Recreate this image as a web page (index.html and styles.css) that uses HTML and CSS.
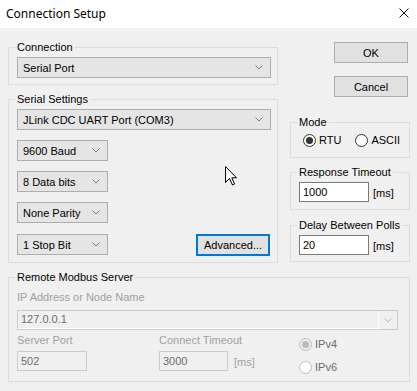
FILE: index.html
```html
<!DOCTYPE html>
<html lang="en">
<head>
    <meta charset="UTF-8">
    <title>Connection Setup</title>
    <link rel="stylesheet" href="styles.css">
</head>
<body>
    <div class="window">
        <div class="titlebar">
            <span class="title">Connection Setup</span>
            <svg class="close" width="10" height="10" viewBox="0 0 10 10">
                <path d="M0.5 0.5 L9.5 9.5 M9.5 0.5 L0.5 9.5" stroke="#111" stroke-width="1" fill="none"/>
            </svg>
        </div>

        <div class="dialog">
            <div class="top">
                <!-- Left column -->
                <div class="left">
                    <fieldset class="group conn">
                        <legend>Connection</legend>
                        <div class="combo wide"><span>Serial Port</span><svg class="chev" width="8" height="5" viewBox="0 0 8 5"><path d="M0.5 0.5 L4 4 L7.5 0.5" stroke="#7a7a7a" fill="none"/></svg></div>
                    </fieldset>

                    <fieldset class="group serial">
                        <legend>Serial Settings</legend>
                        <div class="combo wide"><span>JLink CDC UART Port (COM3)</span><svg class="chev" width="8" height="5" viewBox="0 0 8 5"><path d="M0.5 0.5 L4 4 L7.5 0.5" stroke="#7a7a7a" fill="none"/></svg></div>
                        <div class="combo small"><span>9600 Baud</span><svg class="chev" width="8" height="5" viewBox="0 0 8 5"><path d="M0.5 0.5 L4 4 L7.5 0.5" stroke="#7a7a7a" fill="none"/></svg></div>
                        <div class="combo small"><span>8 Data bits</span><svg class="chev" width="8" height="5" viewBox="0 0 8 5"><path d="M0.5 0.5 L4 4 L7.5 0.5" stroke="#7a7a7a" fill="none"/></svg></div>
                        <div class="combo small"><span>None Parity</span><svg class="chev" width="8" height="5" viewBox="0 0 8 5"><path d="M0.5 0.5 L4 4 L7.5 0.5" stroke="#7a7a7a" fill="none"/></svg></div>
                        <div class="last-row">
                            <div class="combo small"><span>1 Stop Bit</span><svg class="chev" width="8" height="5" viewBox="0 0 8 5"><path d="M0.5 0.5 L4 4 L7.5 0.5" stroke="#7a7a7a" fill="none"/></svg></div>
                            <button class="btn default">Advanced...</button>
                        </div>
                    </fieldset>
                </div>

                <!-- Right column -->
                <div class="right">
                    <button class="btn ok">OK</button>
                    <button class="btn cancel">Cancel</button>

                    <fieldset class="group mode">
                        <legend>Mode</legend>
                        <div class="radios">
                            <label class="radio-item"><span class="radio checked"></span>RTU</label>
                            <label class="radio-item second"><span class="radio"></span>ASCII</label>
                        </div>
                    </fieldset>

                    <fieldset class="group timing">
                        <legend>Response Timeout</legend>
                        <div class="field-row">
                            <div class="input">1000</div>
                            <span class="unit">[ms]</span>
                        </div>
                    </fieldset>

                    <fieldset class="group timing delay">
                        <legend>Delay Between Polls</legend>
                        <div class="field-row">
                            <div class="input">20</div>
                            <span class="unit">[ms]</span>
                        </div>
                    </fieldset>
                </div>
            </div>

            <!-- Remote server (disabled) -->
            <fieldset class="group remote">
                <legend>Remote Modbus Server</legend>
                <div class="dim-label">IP Address or Node Name</div>
                <div class="combo disabled"><span class="edit">127.0.0.1</span><span class="drop"><svg class="chev" width="8" height="5" viewBox="0 0 8 5"><path d="M0.5 0.5 L4 4 L7.5 0.5" stroke="#b5b5b5" fill="none"/></svg></span></div>
                <div class="remote-row">
                    <div class="col port">
                        <div class="dim-label">Server Port</div>
                        <div class="input disabled">502</div>
                    </div>
                    <div class="col conn-timeout">
                        <div class="dim-label">Connect Timeout</div>
                        <div class="field-row">
                            <div class="input disabled">3000</div>
                            <span class="unit dim">[ms]</span>
                        </div>
                    </div>
                    <div class="col ip">
                        <label class="radio-item off"><span class="radio checked"></span>IPv4</label>
                        <label class="radio-item off v6"><span class="radio"></span>IPv6</label>
                    </div>
                </div>
            </fieldset>
        </div>

        <svg class="cursor" width="13" height="20" viewBox="0 0 13 20">
            <path d="M0.5 0.5 L0.5 16.5 L4.5 12.5 L7.5 19 L9.5 18 L6.8 11.8 L11.5 11.8 Z" fill="#fff" stroke="#000" stroke-width="1" stroke-linejoin="miter"/>
        </svg>
    </div>
</body>
</html>
```

FILE: styles.css
```css
/* General */
body {
    margin: 0;
    padding: 0;
    font-family: "Liberation Sans", Arial, sans-serif;
    font-size: 11px;
    color: #000;
    background-color: #f0f0f0;
}

.window {
    position: relative;
    width: 417px;
    height: 391px;
    background-color: #f0f0f0;
}

/* Title bar */
.titlebar {
    height: 28px;
    background-color: #fff;
    display: flex;
    align-items: center;
    justify-content: space-between;
    padding: 0 8px 0 6px;
}

.title {
    font-family: "Noto Sans", sans-serif;
    font-size: 12px;
    line-height: 28px;
    color: #000;
}

.close {
    display: block;
    margin-top: -2px;
}

/* Dialog body */
.dialog {
    padding: 13px 7px 0 8px;
}

.top {
    display: flex;
    gap: 12px;
}

.left {
    width: 270px;
}

.right {
    width: 120px;
    display: flex;
    flex-direction: column;
    align-items: stretch;
}

/* Group boxes */
.group {
    margin: 0;
    padding: 3px 6px 6px 8px;
    border: 1px solid #dcdcdc;
    min-width: 0;
}

.group legend {
    padding: 0 2px;
    margin-left: -2px;
    line-height: 13px;
    font-size: 11px;
}

.serial {
    margin-top: 8px;
}

/* Combo boxes */
.combo {
    height: 21px;
    box-sizing: border-box;
    border: 1px solid #adadad;
    background-color: #e5e5e5;
    display: flex;
    align-items: center;
    justify-content: space-between;
    padding: 0 7px 0 5px;
}

.combo .chev {
    display: block;
}

.serial .combo + .combo,
.serial .last-row {
    margin-top: 10px;
}

.combo.small {
    width: 91px;
}

.last-row {
    display: flex;
    justify-content: space-between;
    align-items: center;
}

/* Buttons */
.btn {
    font-family: "Liberation Sans", Arial, sans-serif;
    font-size: 11px;
    color: #000;
    background-color: #e1e1e1;
    border: 1px solid #adadad;
    height: 21px;
    padding: 0;
    box-sizing: border-box;
}

.btn.default {
    width: 74px;
    height: 22px;
    border: 2px solid #0078d7;
    margin-right: 1px;
    margin-top: 1px;
}

.btn.ok,
.btn.cancel {
    width: 74px;
    align-self: flex-end;
    margin-right: 2px;
}

.btn.ok {
    margin-top: 1px;
}

.btn.cancel {
    margin-top: 13px;
}

/* Mode */
.mode {
    margin-top: 19px;
    padding-top: 5px;
    padding-bottom: 10px;
}

.radios {
    display: flex;
    padding-left: 4px;
}

.radio-item {
    display: flex;
    align-items: center;
    height: 13px;
    line-height: 13px;
}

.radio-item.second {
    margin-left: 14px;
}

.radio {
    width: 13px;
    height: 13px;
    box-sizing: border-box;
    border: 1px solid #333;
    border-radius: 50%;
    background-color: #fff;
    margin-right: 3px;
    position: relative;
}

.radio.checked::after {
    content: "";
    position: absolute;
    left: 2px;
    top: 2px;
    width: 7px;
    height: 7px;
    border-radius: 50%;
    background-color: #333;
}

/* Timing inputs */
.timing {
    margin-top: 8px;
    padding-bottom: 7px;
}

.timing.delay {
    margin-top: 9px;
    padding-bottom: 6px;
}

.field-row {
    display: flex;
    align-items: center;
}

.input {
    width: 70px;
    height: 20px;
    box-sizing: border-box;
    border: 1px solid #7a7a7a;
    background-color: #fff;
    padding-left: 3px;
    line-height: 18px;
}

.unit {
    margin-left: 4px;
    padding-top: 2px;
}

/* Remote server, disabled */
.remote {
    margin-top: 8px;
    padding: 7px 11px 7px 8px;
}

.dim-label {
    color: #a0a0a0;
    line-height: 13px;
}

.combo.disabled {
    margin-top: 6px;
    height: 20px;
    padding: 0;
    border-color: #cccccc;
    background-color: #f0f0f0;
    color: #6d6d6d;
    align-items: stretch;
}

.combo.disabled .edit {
    flex: 1;
    padding-left: 3px;
    line-height: 17px;
    box-shadow: inset -1px -1px 0 #fff;
}

.combo.disabled .drop {
    width: 18px;
    display: flex;
    align-items: center;
    justify-content: center;
}

.remote-row {
    display: flex;
    margin-top: 4px;
}

.remote-row .col {
    flex-shrink: 0;
}

.col.port {
    width: 142px;
}

.col.conn-timeout {
    width: 140px;
}

.col.ip {
    flex: 1;
    padding-top: 4px;
}

.remote-row .dim-label {
    margin-bottom: 4px;
}

.input.disabled {
    border-color: #cccccc;
    background-color: #f0f0f0;
    color: #6d6d6d;
}

.conn-timeout .input {
    width: 69px;
}

.unit.dim {
    color: #a0a0a0;
    margin-left: 6px;
}

.radio-item.off {
    color: #6d6d6d;
}

.radio-item.off .radio {
    border-color: #bcbcbc;
}

.radio-item.off .radio.checked {
    background-color: #f0f0f0;
}

.radio-item.off .radio.checked::after {
    background-color: #bcbcbc;
}

.radio-item.v6 {
    margin-top: 10px;
}

/* Mouse pointer over the dialog */
.cursor {
    position: absolute;
    left: 225px;
    top: 166px;
}
```
